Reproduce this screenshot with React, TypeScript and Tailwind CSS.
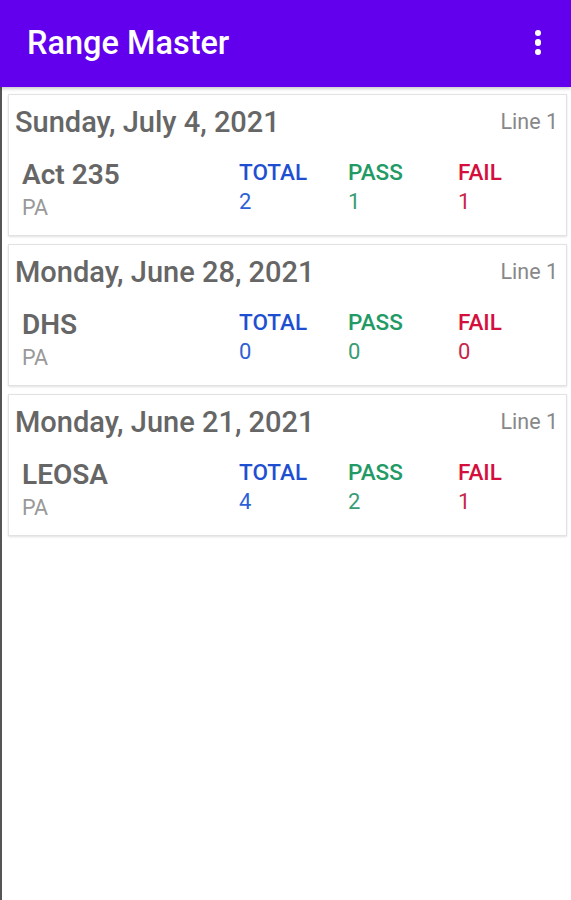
import React from 'react';

interface Session {
  date: string;
  line: string;
  name: string;
  state: string;
  total: number;
  pass: number;
  fail: number;
}

const sessions: Session[] = [
  { date: 'Sunday, July 4, 2021', line: 'Line 1', name: 'Act 235', state: 'PA', total: 2, pass: 1, fail: 1 },
  { date: 'Monday, June 28, 2021', line: 'Line 1', name: 'DHS', state: 'PA', total: 0, pass: 0, fail: 0 },
  { date: 'Monday, June 21, 2021', line: 'Line 1', name: 'LEOSA', state: 'PA', total: 4, pass: 2, fail: 1 },
];

function SessionCard({ s }: { s: Session }) {
  return (
    <div className="bg-white border border-[#e2e2e2] shadow-[0_1px_2px_rgba(0,0,0,0.12)] h-[142px]">
      {/* Date row */}
      <div className="flex items-center justify-between pl-[6px] pr-[8px] pt-[10px]">
        <span className="text-[29px] leading-[34px] font-medium text-[#666666]">{s.date}</span>
        <span className="text-[21.5px] leading-[34px] text-[#888888]">{s.line}</span>
      </div>

      {/* Stats row */}
      <div className="flex pt-[19px]">
        <div className="w-[230px] pl-[13px]">
          <p className="text-[28px] leading-[34px] font-semibold text-[#666666]">{s.name}</p>
          <p className="text-[21.5px] leading-[26px] text-[#999999] mt-[3px]">{s.state}</p>
        </div>
        <div className="w-[109px] pt-[1px]">
          <p className="text-[22.5px] leading-[26px] font-medium text-[#1f4fd1]">TOTAL</p>
          <p className="text-[22px] leading-[30px] mt-[2px] text-[#2e5fd6]">{s.total}</p>
        </div>
        <div className="w-[110px] pt-[1px]">
          <p className="text-[22.5px] leading-[26px] font-medium text-[#229a66]">PASS</p>
          <p className="text-[22px] leading-[30px] mt-[2px] text-[#3a9c74]">{s.pass}</p>
        </div>
        <div className="flex-1 pt-[1px]">
          <p className="text-[22.5px] leading-[26px] font-medium text-[#d40f3c]">FAIL</p>
          <p className="text-[22px] leading-[30px] mt-[2px] text-[#c8264a]">{s.fail}</p>
        </div>
      </div>
    </div>
  );
}

export default function App() {
  return (
    <div className="min-h-[900px] bg-white flex flex-col" style={{ fontFamily: 'Roboto, "Noto Sans", sans-serif' }}>
      {/* App bar */}
      <div className="h-[87px] bg-[#6200ee] flex items-center justify-between pl-[27px] pr-[30px] shadow-[0_2px_3px_rgba(0,0,0,0.2)] z-10">
        <h1 className="text-[32.5px] font-medium text-white">Range Master</h1>
        <div className="flex flex-col items-center gap-[3px] -mt-[2px]">
          <span className="w-[6.5px] h-[6.5px] rounded-full bg-white" />
          <span className="w-[6.5px] h-[6.5px] rounded-full bg-white" />
          <span className="w-[6.5px] h-[6.5px] rounded-full bg-white" />
        </div>
      </div>

      {/* List */}
      <div className="flex-1 border-l-[2px] border-[#555555] pl-[6px] pr-[4px] pt-[7px] flex flex-col gap-[8px]">
        {sessions.map((s, i) => (
          <SessionCard key={i} s={s} />
        ))}
      </div>
    </div>
  );
}
